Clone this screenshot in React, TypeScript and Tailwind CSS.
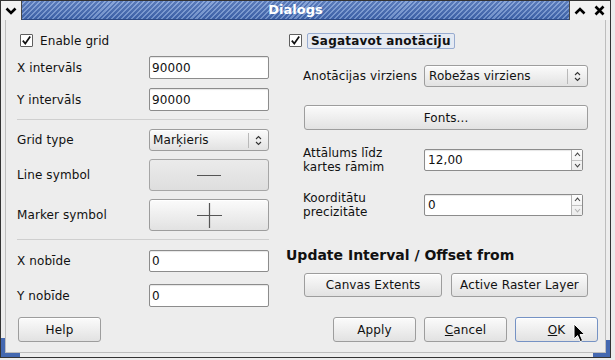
import React from 'react';

// Clearlooks-ish dialog: "Dialogs" grid / annotation settings

function Check() {
  return (
    <span className="w-[13px] h-[13px] border border-[#5f5f5f] bg-white rounded-[1px] flex items-center justify-center shrink-0">
      <svg width="11" height="11" viewBox="0 0 11 11">
        <path d="M1.8 5.6 L4.3 8.6 L9.2 1.4" fill="none" stroke="#111" strokeWidth="1.7" />
      </svg>
    </span>
  );
}

function Btn({ children, className = '', focused = false }: { children?: React.ReactNode; className?: string; focused?: boolean }) {
  return (
    <div
      className={`flex items-center justify-center rounded-[3px] border bg-linear-to-b from-[#fbfbfb] to-[#e2e2e2] text-[12px] text-[#111] shadow-[inset_0_1px_0_#ffffff] ${
        focused ? 'border-[#7592c4]' : 'border-[#9d9d9d]'
      } ${className}`}
    >
      {children}
    </div>
  );
}

function Field({ value }: { value: string }) {
  return (
    <div className="w-[120px] h-full bg-white border border-[#8c8c8c] rounded-[2px] flex items-center pl-[2px] text-[12px] text-[#111] shadow-[inset_0_1px_1px_rgba(0,0,0,0.10)]">
      {value}
    </div>
  );
}

function UpDown() {
  return (
    <svg width="7" height="11" viewBox="0 0 7 11">
      <path d="M1 4 L3.5 1.5 L6 4" fill="none" stroke="#333" strokeWidth="1.1" />
      <path d="M1 7 L3.5 9.5 L6 7" fill="none" stroke="#333" strokeWidth="1.1" />
    </svg>
  );
}

function Combo({ value, className = '' }: { value: string; className?: string }) {
  return (
    <Btn className={`justify-between! h-full ${className}`}>
      <span className="pl-[3px]">{value}</span>
      <span className="flex items-center h-full">
        <span className="w-px h-[15px] bg-[#b9b9b9]" />
        <span className="w-[19px] flex items-center justify-center">
          <UpDown />
        </span>
      </span>
    </Btn>
  );
}

function Spin({ value, downOff = false }: { value: string; downOff?: boolean }) {
  return (
    <div className="w-[159px] h-full bg-white border border-[#8c8c8c] rounded-[2px] flex text-[12px] text-[#111] shadow-[inset_0_1px_1px_rgba(0,0,0,0.10)]">
      <span className="flex-1 flex items-center pl-[3px]">{value}</span>
      <span className="w-[11px] flex flex-col border-l border-[#b3b3b3] bg-linear-to-b from-[#fdfdfd] to-[#ececec]">
        <span className="flex-1 flex items-center justify-center border-b border-[#c2c2c2]">
          <svg width="7" height="5" viewBox="0 0 7 5">
            <path d="M1 4 L3.5 1.2 L6 4" fill="none" stroke="#444" strokeWidth="1.1" />
          </svg>
        </span>
        <span className="flex-1 flex items-center justify-center">
          <svg width="7" height="5" viewBox="0 0 7 5">
            <path d="M1 1 L3.5 3.8 L6 1" fill="none" stroke={downOff ? '#b4b4b4' : '#444'} strokeWidth="1.1" />
          </svg>
        </span>
      </span>
    </div>
  );
}

function Sep({ className = '' }: { className?: string }) {
  return <div className={`h-px w-[252px] bg-[#cfcfcf] ${className}`} />;
}

export default function App() {
  return (
    <div className="w-[615px] h-[360px] bg-[#ececec] font-['DejaVu_Sans',sans-serif] text-[12px] tracking-[0.1px] text-[#111]">
      <div className="relative w-[611px] h-[358px] border border-[#333] bg-[#ededed] flex flex-col">
        {/* title bar */}
        <div className="flex h-[19px] shrink-0">
          <div className="w-[21px] bg-[#f1f1f1] border-r border-[#4a4a4a] flex items-center justify-center">
            <svg width="12" height="8" viewBox="0 0 12 8">
              <path d="M1.5 1.5 L6 6 L10.5 1.5" fill="none" stroke="#000" strokeWidth="2.6" />
            </svg>
          </div>
          <div className="flex-1 bg-[image:linear-gradient(to_bottom,rgba(255,255,255,0.14),rgba(0,0,0,0.06)),repeating-linear-gradient(135deg,#4066b0_0px,#4066b0_2px,#7899d4_2px,#7899d4_3.5px)] flex items-center justify-center text-white font-bold text-[13px] tracking-normal border-b border-[#2d4a85]">
            Dialogs
          </div>
          <div className="w-[20px] bg-[#f1f1f1] border-l border-[#4a4a4a] flex items-center justify-center">
            <svg width="12" height="8" viewBox="0 0 12 8">
              <path d="M1.5 6.5 L6 2 L10.5 6.5" fill="none" stroke="#000" strokeWidth="2.6" />
            </svg>
          </div>
          <div className="w-[21px] bg-[#f1f1f1] flex items-center justify-center">
            <svg width="11" height="11" viewBox="0 0 11 11">
              <path d="M1.5 1.5 L9.5 9.5 M9.5 1.5 L1.5 9.5" fill="none" stroke="#000" strokeWidth="2.6" />
            </svg>
          </div>
        </div>

        {/* frame + body */}
        <div className="flex-1 flex px-[4px] pb-[4px]">
          <div className="flex-1 flex flex-col border-x border-b border-[#bdbdbd]">
            <div className="flex pl-[11px]">
              {/* left column */}
              <div className="w-[252px] flex flex-col">
                <div className="mt-[11px] h-[19px] flex items-center">
                  <span className="ml-[3px]"><Check /></span>
                  <span className="ml-[7px]">Enable grid</span>
                </div>
                <div className="mt-[6px] h-[23px] flex items-center justify-between">
                  <span>X intervāls</span>
                  <Field value="90000" />
                </div>
                <div className="mt-[9px] h-[23px] flex items-center justify-between">
                  <span>Y intervāls</span>
                  <Field value="90000" />
                </div>
                <Sep className="mt-[8px]" />
                <div className="mt-[9px] h-[22px] flex items-center justify-between">
                  <span>Grid type</span>
                  <Combo value="Marķieris" className="w-[120px]" />
                </div>
                <div className="mt-[8px] h-[32px] flex items-center justify-between">
                  <span>Line symbol</span>
                  <div className="w-[120px] h-full flex items-center justify-center rounded-[3px] border border-[#a6a6a6] bg-linear-to-b from-[#ebebeb] to-[#dedede]">
                    <span className="w-[24px] h-px bg-[#555]" />
                  </div>
                </div>
                <div className="mt-[8px] h-[32px] flex items-center justify-between">
                  <span>Marker symbol</span>
                  <Btn className="w-[120px] h-full">
                    <svg width="25" height="25" viewBox="0 0 25 25">
                      <path d="M0 12.5 H25 M12.5 0 V25" stroke="#555" strokeWidth="1.2" />
                    </svg>
                  </Btn>
                </div>
                <Sep className="mt-[8px]" />
                <div className="mt-[10px] h-[22px] flex items-center justify-between">
                  <span>X nobīde</span>
                  <Field value="0" />
                </div>
                <div className="mt-[12px] h-[23px] flex items-center justify-between">
                  <span>Y nobīde</span>
                  <Field value="0" />
                </div>
              </div>

              {/* right column */}
              <div className="ml-[17px] w-[302px] flex flex-col">
                <div className="mt-[11px] h-[19px] flex items-center">
                  <span className="ml-[3px]"><Check /></span>
                  <span className="ml-[5px] h-[16px] px-[3px] flex items-center border border-[#98acd0] bg-[#e5eaf3] rounded-[2px] font-bold tracking-[0.2px]">
                    Sagatavot anotāciju
                  </span>
                </div>
                <div className="mt-[15px] h-[22px] pl-[17px] flex items-center justify-between">
                  <span>Anotācijas virziens</span>
                  <Combo value="Robežas virziens" className="w-[164px] [&>span:first-child]:pl-[4px]" />
                </div>
                <Btn className="mt-[18px] ml-[18px] w-[284px] h-[25px]">Fonts...</Btn>
                <div className="mt-[19px] h-[22px] pl-[17px] pr-[5px] flex items-center justify-between">
                  <span className="leading-[14px]">
                    Attālums līdz
                    <br />
                    kartes rāmim
                  </span>
                  <Spin value="12,00" />
                </div>
                <div className="mt-[23px] h-[22px] pl-[17px] pr-[5px] flex items-center justify-between">
                  <span className="leading-[14px]">
                    Koorditātu
                    <br />
                    precizitāte
                  </span>
                  <Spin value="0" downOff />
                </div>
                <div className="mt-[31px] h-[17px] flex items-center font-bold text-[14px] tracking-normal whitespace-nowrap">
                  Update Interval / Offset from
                </div>
                <div className="mt-[9px] h-[24px] pl-[18px] flex gap-[9px]">
                  <Btn className="w-[138px] h-full">Canvas Extents</Btn>
                  <Btn className="w-[137px] h-full">Active Raster Layer</Btn>
                </div>
              </div>
            </div>

            {/* bottom buttons */}
            <div className="mt-[10px] h-[25px] flex pl-[12px] pr-[7px]">
              <Btn className="w-[83px] h-full">Help</Btn>
              <div className="ml-auto flex gap-[8px]">
                <Btn className="w-[83px] h-full">Apply</Btn>
                <Btn className="w-[83px] h-full">
                  <span><span className="underline">C</span>ancel</span>
                </Btn>
                <Btn className="w-[83px] h-full" focused>
                  <span><span className="underline">O</span>K</span>
                </Btn>
              </div>
            </div>
          </div>
        </div>

        {/* resize corners */}
        <div className="absolute left-0 bottom-0 w-[19px] h-[19px] border-l-4 border-b-4 border-[#4468b0]" />
        <div className="absolute right-0 bottom-0 w-[17px] h-[17px] border-r-4 border-b-4 border-[#4468b0]" />

        {/* mouse pointer */}
        <svg className="absolute left-[572px] top-[322px]" width="13" height="21" viewBox="0 0 13 21">
          <path d="M1 1 L1 16 L4.6 12.6 L7.2 18.6 L9.6 17.6 L7 11.6 L11.8 11.6 Z" fill="#000" stroke="#fff" strokeWidth="1" />
        </svg>
      </div>
    </div>
  );
}
